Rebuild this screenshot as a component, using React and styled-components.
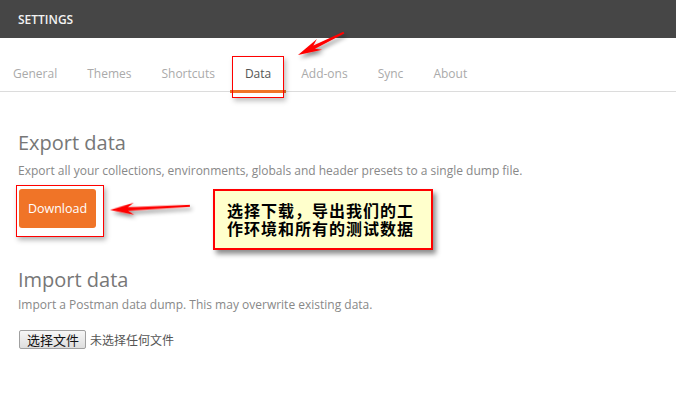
import styled, { createGlobalStyle } from "styled-components";

const GlobalStyle = createGlobalStyle`
  html, body {
    margin: 0;
    padding: 0;
    background: #fff;
  }
  body {
    font-family: "Open Sans", "Noto Sans CJK SC", sans-serif;
  }
`;

const Page = styled.div`
  position: relative;
  width: 676px;
  height: 404px;
  overflow: hidden;
  background: #fff;
`;

const Header = styled.div`
  height: 38px;
  background-color: #464646;
  display: flex;
  align-items: center;
  padding-left: 18px;
  color: #f2f2f2;
  font-size: 12px;
  font-weight: 600;
`;

const TabBar = styled.div`
  position: relative;
  height: 53px;
  display: flex;
  align-items: flex-end;
  border-bottom: 1px solid #dcdcdc;
`;

const Tab = styled.div`
  padding: 0 15px 8px;
  margin-left: ${(p) => (p.$first ? "-2px" : "0")};
  font-size: 12px;
  color: ${(p) => (p.$active ? "#555" : "#aaa")};
  border-bottom: 3px solid ${(p) => (p.$active ? "#f07427" : "transparent")};
  margin-bottom: -2px;
  line-height: 17px;
`;

const TabMark = styled.div`
  position: absolute;
  left: 232px;
  top: 18px;
  width: 50px;
  height: 40px;
  border: 1px solid #ff0000;
  box-shadow: 2px 3px 5px rgba(0, 0, 0, 0.25);
`;

const Content = styled.div`
  padding: 0 18px;
`;

const Section = styled.div`
  display: flex;
  flex-direction: column;
  align-items: flex-start;
  margin-top: ${(p) => p.$top}px;
`;

const Heading = styled.h2`
  margin: 0;
  font-size: 20px;
  font-weight: 400;
  color: #777;
  line-height: 28px;
`;

const Note = styled.p`
  margin: ${(p) => p.$top}px 0 0;
  font-size: 12px;
  color: #888;
  line-height: 16px;
`;

const Highlight = styled.div`
  margin-top: 6px;
  margin-left: -2px;
  padding: 3px 7px 8px 2px;
  border: 1px solid #ff0000;
  box-shadow: 2px 3px 5px rgba(0, 0, 0, 0.3);
`;

const Button = styled.button`
  width: 77px;
  height: 39px;
  border: none;
  border-radius: 3px;
  background-color: #f07427;
  color: #fff;
  font-family: "Open Sans", sans-serif;
  font-size: 12.5px;
  padding: 0;
`;

const FileRow = styled.div`
  display: flex;
  align-items: center;
  gap: 4px;
  margin-top: 17px;
  font-family: "Microsoft YaHei", "Noto Sans CJK SC", sans-serif;
  font-size: 12px;
`;

const FileButton = styled.div`
  height: 17px;
  padding: 0 6px 0 7px;
  margin-left: 1px;
  display: flex;
  align-items: center;
  border: 1px solid #a0a0a0;
  border-radius: 2px;
  background: linear-gradient(#f6f6f6, #dedede);
  color: #111;
  font-size: 13px;
`;

const FileName = styled.span`
  color: #555;
`;

const Callout = styled.div`
  position: absolute;
  left: 213px;
  top: 189px;
  width: 220px;
  height: 61px;
  border: 2px solid #ff0000;
  background: #ffffcc;
  box-shadow: 3px 4px 5px rgba(0, 0, 0, 0.45);
  padding: 10px 0 0 12px;
  box-sizing: border-box;
  font-family: "Noto Sans CJK SC", sans-serif;
  font-weight: 700;
  font-size: 16px;
  letter-spacing: 1px;
  color: #000;
`;

const CalloutLine = styled.div`
  height: 18px;
  line-height: 18px;
  white-space: nowrap;
`;

const Overlay = styled.svg`
  position: absolute;
  left: 0;
  top: 0;
  pointer-events: none;
`;

const Arrow = ({ x, y, angle, length }) => (
  <g transform={`translate(${x} ${y}) rotate(${angle})`}>
    <polygon
      points={`0,0 24,-6 18,-1.8 ${length},-1 ${length},1 18,1.8 24,6`}
      fill="#ff0000"
    />
  </g>
);

export default function App() {
  const tabs = ["General", "Themes", "Shortcuts", "Data", "Add-ons", "Sync", "About"];
  return (
    <Page>
      <GlobalStyle />
      <Header>SETTINGS</Header>
      <TabBar>
        {tabs.map((t, i) => (
          <Tab key={t} $first={i === 0} $active={t === "Data"}>
            {t}
          </Tab>
        ))}
        <TabMark />
      </TabBar>
      <Content>
        <Section $top={37}>
          <Heading>Export data</Heading>
          <Note $top={6}>
            Export all your collections, environments, globals and header presets to a single dump file.
          </Note>
          <Highlight>
            <Button>Download</Button>
          </Highlight>
        </Section>
        <Section $top={29}>
          <Heading>Import data</Heading>
          <Note $top={3}>
            Import a Postman data dump. This may overwrite existing data.
          </Note>
          <FileRow>
            <FileButton>选择文件</FileButton>
            <FileName>未选择任何文件</FileName>
          </FileRow>
        </Section>
      </Content>
      <Callout>
        <CalloutLine>选择下载，导出我们的工</CalloutLine>
        <CalloutLine>作环境和所有的测试数据</CalloutLine>
      </Callout>
      <Overlay width="676" height="404" viewBox="0 0 676 404">
        <defs>
          <filter id="sh" x="-20%" y="-50%" width="160%" height="250%">
            <feDropShadow dx="2" dy="3" stdDeviation="2" floodColor="#000" floodOpacity="0.45" />
          </filter>
        </defs>
        <g filter="url(#sh)">
          <Arrow x={298} y={55} angle={-26} length={51} />
          <Arrow x={110} y={210} angle={-3} length={80} />
        </g>
      </Overlay>
    </Page>
  );
}
